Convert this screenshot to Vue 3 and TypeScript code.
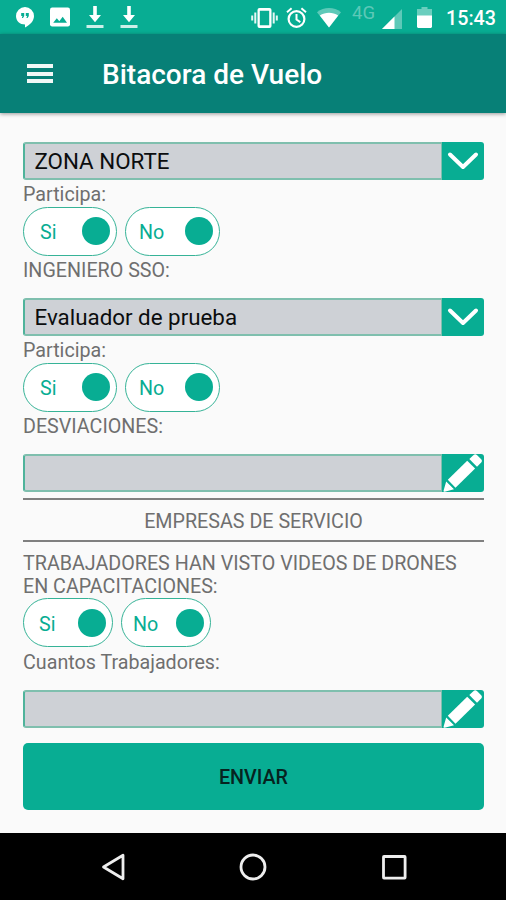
<script setup lang="ts">
import { ref } from 'vue'

type Block =
  | { kind: 'select' | 'edit'; value: string }
  | { kind: 'label'; text: string }
  | { kind: 'toggles'; compact: boolean }
  | { kind: 'heading'; text: string }

const title = 'Bitacora de Vuelo'
const clock = '15:43'

const form = ref<Block[]>([
  { kind: 'select', value: 'ZONA NORTE' },
  { kind: 'label', text: 'Participa:' },
  { kind: 'toggles', compact: false },
  { kind: 'label', text: 'INGENIERO SSO:' },
  { kind: 'select', value: 'Evaluador de prueba' },
  { kind: 'label', text: 'Participa:' },
  { kind: 'toggles', compact: false },
  { kind: 'label', text: 'DESVIACIONES:' },
  { kind: 'edit', value: '' },
  { kind: 'heading', text: 'EMPRESAS DE SERVICIO' },
  { kind: 'label', text: 'TRABAJADORES HAN VISTO VIDEOS DE DRONES EN CAPACITACIONES:' },
  { kind: 'toggles', compact: true },
  { kind: 'label', text: 'Cuantos Trabajadores:' },
  { kind: 'edit', value: '' },
])
</script>

<template>
  <div class="screen">
    <header class="status">
      <div class="status-left">
        <svg width="18" height="21" viewBox="0 0 18 21">
          <path fill="#fff" d="M9 0a9 9 0 0 0-9 9c0 5 4 8.500 9 8.500V20.500c5-2.500 9-6.500 9-11.500a9 9 0 0 0-9-9z" />
          <path fill="#08ad93" d="M5.200 6h3v3L7 11H5.800L6.500 9H5.200zM9.800 6h3v3l-1.200 2h-1.200l.7-2H9.800z" />
        </svg>
        <svg width="20" height="20" viewBox="0 0 20 20">
          <rect width="20" height="19" rx="2.200" y=".500" fill="#fff" />
          <path fill="#08ad93" d="M3.200 15.800l3.600-4.600 2.500 3 3.400-4.500 4.300 6.100z" />
        </svg>
        <svg v-for="n in 2" :key="n" class="download" width="18" height="23" viewBox="0 0 18 23">
          <path fill="#fff" d="M7.200 0h3.600v9h4.200l-6 7.200L3 9h4.200z" />
          <path fill="#fff" opacity=".8" d="M.5 19h17v3H.5z" />
        </svg>
      </div>
      <div class="status-right">
        <svg class="vibrate" width="27" height="22" viewBox="0 0 27 22">
          <path fill="#fff" fill-rule="evenodd" d="M8.500 1h10a2 2 0 0 1 2 2v16a2 2 0 0 1-2 2h-10a2 2 0 0 1-2-2V3a2 2 0 0 1 2-2zm.3 2.700v14.600h9.400V3.700z" />
          <path stroke="#fff" stroke-width="2" opacity=".9" d="M1.200 8.500v5M4.300 5.500v11M22.700 5.500v11M25.800 8.500v5" />
        </svg>
        <svg class="alarm" width="21" height="22" viewBox="0 0 21 22" fill="none" stroke="#fff">
          <circle cx="10.500" cy="12" r="7.900" stroke-width="2.200" />
          <path stroke-width="2" d="M1 5.200L5.600 1.300M20 5.200l-4.600-3.900M10.500 7v5.500l3.800 2.600" />
        </svg>
        <svg class="wifi" width="24" height="20" viewBox="0 0 24 20">
          <path fill="#fff" opacity=".35" d="M0 4.200C7-1.400 17-1.400 24 4.200L12 19.500z" />
          <path fill="#fff" d="M2.800 7.500c5.600-3.700 12.800-3.700 18.400 0L12 19.500z" />
        </svg>
        <span class="network">4G</span>
        <svg class="signal" width="20" height="20" viewBox="0 0 20 20">
          <path fill="#fff" opacity=".35" d="M20 0v20H0z" />
          <path fill="#fff" d="M12.500 7.500V20H0z" />
        </svg>
        <svg class="battery" width="15" height="21" viewBox="0 0 15 21">
          <path fill="#fff" opacity=".4" d="M4.500 0h6v2H15v7H0V2h4.500z" />
          <path fill="#fff" d="M0 8.500h15V20l-1 1H1l-1-1z" />
        </svg>
        <span class="clock">{{ clock }}</span>
      </div>
    </header>

    <div class="appbar">
      <button class="menu" aria-label="Menu"><i></i><i></i><i></i></button>
      <h1>{{ title }}</h1>
    </div>

    <main class="form">
      <template v-for="(item, index) in form" :key="index">
        <div v-if="item.kind === 'select' || item.kind === 'edit'" class="field" :class="item.kind">
          <span class="value">{{ item.value }}</span>
          <span class="action">
            <svg v-if="item.kind === 'select'" width="42" height="38" viewBox="0 0 42 38">
              <path d="M8 12.500L21 25L34 12.500" fill="none" stroke="#fff" stroke-width="4" stroke-linecap="round" stroke-linejoin="round" />
            </svg>
            <svg v-else width="42" height="38" viewBox="0 0 42 38">
              <g fill="#fff">
                <path d="M5.800 25.800L25.200 6.700l7.900 7.800-19.600 19.300z" />
                <path d="M27.300 5.100L31.600 1Q33.200-.4 34.900 1L39.200 5.300Q40.600 7 39.200 8.600L35 12.700z" />
                <path d="M4.200 27.500L12 35.300l-9.300 2.500q-1.500.2-1.100-1.200z" />
              </g>
            </svg>
          </span>
        </div>
        <p v-else-if="item.kind === 'label'" class="label">{{ item.text }}</p>
        <div v-else-if="item.kind === 'toggles'" class="toggles" :class="{ compact: item.compact }">
          <button class="toggle yes"><span>Si</span><i></i></button>
          <button class="toggle no"><span>No</span><i></i></button>
        </div>
        <h2 v-else class="heading">{{ item.text }}</h2>
      </template>
      <button class="submit">ENVIAR</button>
    </main>

    <nav class="navbar">
      <svg width="28" height="30" viewBox="0 0 28 30"><path d="M24 3.200v23.600L4.500 15z" /></svg>
      <svg width="28" height="30" viewBox="0 0 28 30"><circle cx="14" cy="15" r="12" /></svg>
      <svg width="28" height="30" viewBox="0 0 28 30"><rect x="3.500" y="4.500" width="21.600" height="21.600" rx=".5" /></svg>
    </nav>
  </div>
</template>

<style>
body {
  margin: 0;
}
</style>

<style scoped>
.screen {
  width: 506px;
  height: 900px;
  display: flex;
  flex-direction: column;
  overflow: hidden;
  background: #fafafa;
  font-family: Roboto, sans-serif;
  font-size: 19.7px;
  line-height: 23px;
}
button {
  font: inherit;
  padding: 0;
  border: 0;
  background: none;
}
svg {
  display: block;
  flex: none;
}
.status {
  height: 34px;
  flex: none;
  display: flex;
  justify-content: space-between;
  background: #08ad93;
  color: #fff;
}
.status-left {
  display: flex;
  align-items: flex-start;
  gap: 16px;
  padding: 7px 0 0 16px;
}
.status-left .download {
  margin-top: -1px;
}
.status-right {
  display: flex;
  align-items: flex-start;
  padding: 7px 10px 0 0;
}
.alarm {
  margin-left: 8px;
}
.wifi {
  margin: 1px 0 0 10px;
}
.network {
  margin: -6px 0 0 11px;
  width: 23px;
  font-size: 18.500px;
  line-height: 24px;
  color: rgba(255, 255, 255, 0.35);
}
.signal {
  margin: 2px 0 0 7px;
}
.battery {
  margin-left: 15px;
}
.clock {
  width: 50px;
  margin-left: 14px;
  font-weight: 500;
}
.appbar {
  height: 79px;
  flex: none;
  display: flex;
  align-items: center;
  gap: 49px;
  padding-left: 27px;
  box-sizing: border-box;
  background: #078077;
  box-shadow: 0 1px 4px rgba(0, 0, 0, 0.4);
}
.menu {
  width: 26px;
  display: flex;
  flex-direction: column;
  gap: 3.700px;
}
.menu i {
  height: 4px;
  background: #f1f8f7;
}
.appbar h1 {
  margin: 3px 0 0;
  font-size: 28px;
  line-height: 34px;
  font-weight: 500;
  color: #fff;
  white-space: nowrap;
}
.form {
  flex: 1;
  display: flex;
  flex-direction: column;
  padding: 29px 22px 0 23px;
}
.field {
  height: 38px;
  flex: none;
  display: flex;
  margin-bottom: 2.500px;
}
.value {
  flex: 1;
  box-sizing: border-box;
  border: 2px solid #7fbfae;
  border-left-color: #4fb39b;
  border-right-width: 1px;
  border-radius: 3px 0 0 3px;
  background: #ced1d6;
  padding-left: 9.500px;
  font-size: 22.350px;
  line-height: 34px;
  color: #0b0d0e;
}
.action {
  width: 42px;
  height: 38px;
  overflow: hidden;
  border-radius: 0 3px 3px 0;
  background: #08ad93;
}
.label {
  margin: 0;
  color: #6f6f6f;
}
.label + .field {
  margin-top: 16.500px;
}
.toggles {
  height: 49px;
  display: flex;
  gap: 8px;
  margin: 1px 0 3px;
}
.toggle {
  width: 94px;
  height: 49px;
  display: flex;
  align-items: center;
  justify-content: space-between;
  box-sizing: border-box;
  border: 1.500px solid #36b397;
  border-radius: 25px;
  padding: 0 6px 0 16px;
  background: #fff;
  color: #08ad93;
}
.toggle.no {
  width: 95px;
  padding-left: 13px;
}
.toggle span {
  padding-top: 2px;
}
.toggle i {
  width: 28px;
  height: 28px;
  border-radius: 50%;
  background: #08ad93;
}
.toggles.compact {
  margin: 0 0 3.500px;
}
.compact .toggle {
  width: 90px;
  padding-left: 15px;
}
.compact .no {
  padding-left: 11px;
}
.compact .toggle span {
  padding-top: 3px;
}
.heading {
  height: 44px;
  flex: none;
  box-sizing: border-box;
  margin: 3.500px 0 10px;
  border: solid #808080;
  border-width: 2px 0;
  text-align: center;
  font-size: inherit;
  font-weight: 400;
  line-height: 43px;
  color: #6f6f6f;
}
.submit {
  height: 67px;
  flex: none;
  margin-top: 12px;
  padding-top: 2px;
  border-radius: 5px;
  background: #08ad93;
  color: #06231f;
  font-weight: 500;
}
.navbar {
  height: 67px;
  flex: none;
  display: flex;
  justify-content: center;
  align-items: center;
  gap: 112.500px;
  background: #000;
}
.navbar svg {
  fill: none;
  stroke: #eee;
  stroke-width: 2.800;
  stroke-linejoin: round;
}
</style>
